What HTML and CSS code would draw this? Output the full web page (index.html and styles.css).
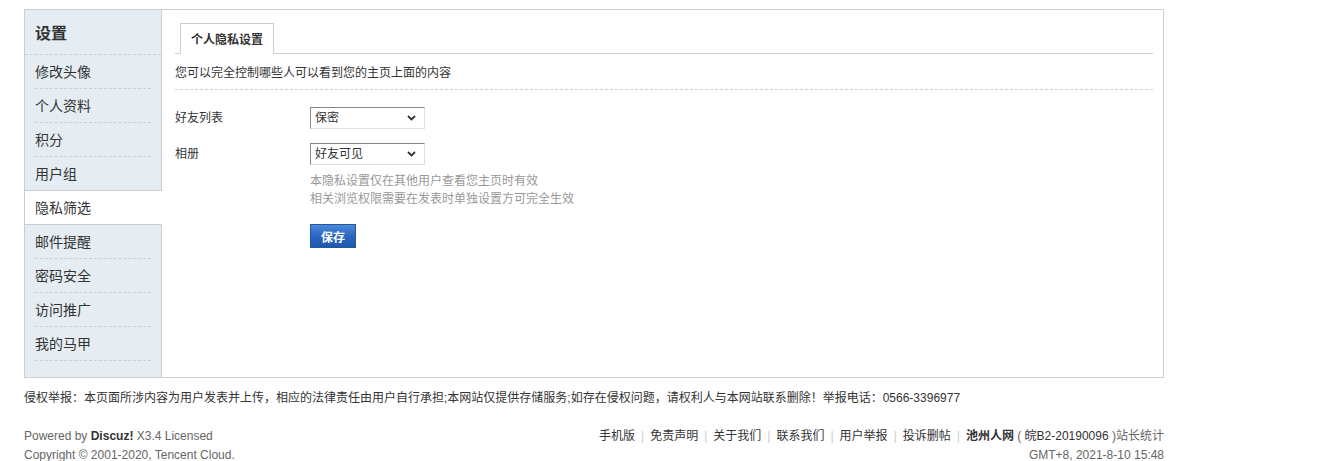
FILE: index.html
```html
<!DOCTYPE html>
<html lang="zh-CN">
<head>
  <meta charset="UTF-8" />
  <meta name="viewport" content="width=device-width, initial-scale=1.0"/>
  <title>个人隐私设置 - 池州人网</title>
  <link rel="stylesheet" href="styles.css">
</head>
<body>

  <div class="wrap">
    <div class="box">
      <div class="side">
        <h2>设置</h2>
        <ul>
          <li><a href="#">修改头像</a></li>
          <li><a href="#">个人资料</a></li>
          <li><a href="#">积分</a></li>
          <li><a href="#">用户组</a></li>
          <li class="active"><a href="#">隐私筛选</a></li>
          <li><a href="#">邮件提醒</a></li>
          <li><a href="#">密码安全</a></li>
          <li><a href="#">访问推广</a></li>
          <li><a href="#">我的马甲</a></li>
        </ul>
      </div>

      <div class="main">
        <ul class="tabs">
          <li class="current"><a href="#">个人隐私设置</a></li>
        </ul>
        <p class="intro">您可以完全控制哪些人可以看到您的主页上面的内容</p>

        <form class="privacy">
          <div class="row">
            <label for="friend">好友列表</label>
            <span class="select-wrap">
              <select id="friend">
                <option>保密</option>
                <option>好友可见</option>
                <option>公开</option>
              </select>
              <svg class="chev" width="9" height="6" viewBox="0 0 9 6"><path d="M1 1l3.5 3.5L8 1" fill="none" stroke="#333" stroke-width="1.8"/></svg>
            </span>
          </div>
          <div class="row">
            <label for="album">相册</label>
            <span class="select-wrap">
              <select id="album">
                <option>好友可见</option>
                <option>保密</option>
                <option>公开</option>
              </select>
              <svg class="chev" width="9" height="6" viewBox="0 0 9 6"><path d="M1 1l3.5 3.5L8 1" fill="none" stroke="#333" stroke-width="1.8"/></svg>
            </span>
          </div>
          <div class="hint">
            本隐私设置仅在其他用户查看您主页时有效<br>
            相关浏览权限需要在发表时单独设置方可完全生效
          </div>
          <div class="actions">
            <button type="button">保存</button>
          </div>
        </form>
      </div>
    </div>

    <div class="notice">侵权举报：本页面所涉内容为用户发表并上传，相应的法律责任由用户自行承担;本网站仅提供存储服务;如存在侵权问题，请权利人与本网站联系删除！举报电话：0566-3396977</div>

    <div class="footer">
      <div class="left">
        <p>Powered by <strong>Discuz!</strong> X3.4 Licensed</p>
        <p>Copyright &copy; 2001-2020, Tencent Cloud.</p>
      </div>
      <div class="right">
        <p>
          <a href="#">手机版</a><span class="pipe">|</span><a href="#">免责声明</a><span class="pipe">|</span><a href="#">关于我们</a><span class="pipe">|</span><a href="#">联系我们</a><span class="pipe">|</span><a href="#">用户举报</a><span class="pipe">|</span><a href="#">投诉删帖</a><span class="pipe">|</span><strong><a href="#">池州人网</a></strong> ( <a href="#">皖B2-20190096</a> )站长统计
        </p>
        <p class="time">GMT+8, 2021-8-10 15:48</p>
      </div>
    </div>
  </div>

</body>
</html>
```

FILE: styles.css
```css
* {
  box-sizing: border-box;
}
body {
  margin: 0;
  font: 12px/1.5 "Liberation Sans", "Noto Sans CJK SC", sans-serif;
  color: #333;
  background: #fff;
}
a {
  color: #333;
  text-decoration: none;
}
ul {
  margin: 0;
  padding: 0;
  list-style: none;
}
p {
  margin: 0;
}
.wrap {
  width: 1140px;
  margin: 9px 0 0 24px;
}
.box {
  display: flex;
  border: 1px solid #cdcdcd;
  background: #fff;
}

/* sidebar */
.side {
  width: 137px;
  flex: none;
  background: #e5edf2;
  border-right: 1px solid #cdcdcd;
  padding-bottom: 16px;
}
.side h2 {
  margin: 0;
  padding: 0 10px;
  height: 45px;
  line-height: 47px;
  font-size: 16px;
  font-weight: bold;
  border-bottom: 1px dashed #cdcdcd;
  overflow: hidden;
}
.side li {
  margin: 0 10px;
  height: 34px;
  line-height: 35px;
  font-size: 14px;
  border-bottom: 1px dashed #cdcdcd;
  overflow: hidden;
}
.side li.active {
  margin: -1px -1px 0 0;
  padding-left: 10px;
  height: 35px;
  line-height: 34px;
  background: #fff;
  border-top: 1px solid #cdcdcd;
  border-bottom: 1px solid #cdcdcd;
  position: relative;
}

/* content */
.main {
  flex: 1;
  padding: 13px 10px 0 13px;
}
.tabs {
  display: flex;
  padding-left: 5px;
  height: 31px;
  border-bottom: 1px solid #cdcdcd;
}
.tabs li {
  height: 31px;
}
.tabs a {
  display: block;
  height: 31px;
  padding: 2px 10px 0;
  line-height: 29px;
  font-weight: bold;
  background: #fff;
  border: 1px solid #cdcdcd;
  border-bottom: none;
}
.intro {
  margin-top: 10px;
  line-height: 18px;
  padding-bottom: 7px;
  border-bottom: 1px dashed #cdcdcd;
}
.privacy {
  margin-top: 10px;
}
.row {
  display: flex;
  align-items: center;
  height: 36px;
}
.row label {
  width: 135px;
  line-height: 22px;
}
.select-wrap {
  position: relative;
  display: flex;
}
.select-wrap select {
  -webkit-appearance: none;
  appearance: none;
  width: 115px;
  height: 22px;
  padding: 0 20px 0 4px;
  font: 12px "Liberation Sans", "Noto Sans CJK SC", sans-serif;
  color: #333;
  background: #fff;
  border: 1px solid;
  border-color: #848484 #e0e0e0 #e0e0e0 #848484;
  border-radius: 0;
  outline: none;
}
.chev {
  position: absolute;
  right: 9px;
  top: 8px;
  pointer-events: none;
}
.hint {
  margin: 0 0 0 135px;
  line-height: 18px;
  color: #999;
}
.actions {
  margin: 16px 0 0 135px;
  padding-bottom: 20px;
}
.actions button {
  height: 24px;
  padding: 0 10px;
  font: bold 12px "Liberation Sans", "Noto Sans CJK SC", sans-serif;
  color: #fff;
  background: linear-gradient(#4a88dc, #2a67c0 50%, #1d58b0);
  border: 1px solid #235994;
  cursor: pointer;
}

/* footer */
.notice {
  margin-top: 11px;
  line-height: 18px;
}
.footer {
  display: flex;
  justify-content: space-between;
  margin-top: 20px;
  line-height: 19px;
  color: #666;
}
.footer strong {
  color: #333;
}
.footer .right {
  text-align: right;
}
.footer .right a {
  color: #333;
}
.pipe {
  margin: 0 6px;
  color: #ccc;
}
.footer .time {
  color: #666;
}
```
